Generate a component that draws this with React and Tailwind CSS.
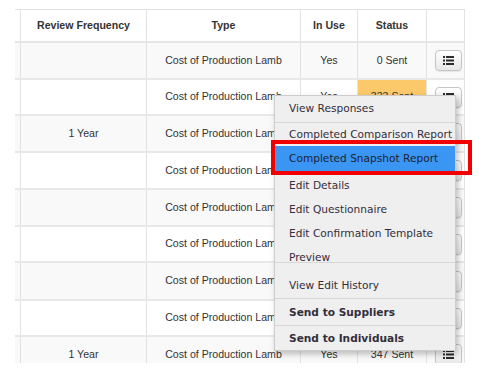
import React from "react";

const rows = [
  { freq: "", inUse: "Yes", status: "0 Sent", h: 37 },
  { freq: "", inUse: "Yes", status: "333 Sent", h: 36, orange: true },
  { freq: "1 Year", inUse: "Yes", status: "12 Sent", h: 37 },
  { freq: "", inUse: "Yes", status: "0 Sent", h: 37 },
  { freq: "", inUse: "Yes", status: "0 Sent", h: 37 },
  { freq: "", inUse: "Yes", status: "0 Sent", h: 36 },
  { freq: "", inUse: "Yes", status: "0 Sent", h: 38 },
  { freq: "", inUse: "Yes", status: "0 Sent", h: 36 },
  { freq: "1 Year", inUse: "Yes", status: "347 Sent", h: 37 },
];

function ListIcon() {
  return (
    <svg width="11" height="9" viewBox="0 0 11 9" fill="#2b2b2b">
      <rect x="0" y="0" width="2" height="2" />
      <rect x="3" y="0" width="8" height="2" />
      <rect x="0" y="3.5" width="2" height="2" />
      <rect x="3" y="3.5" width="8" height="2" />
      <rect x="0" y="7" width="2" height="2" />
      <rect x="3" y="7" width="8" height="2" />
    </svg>
  );
}

const cell = "flex items-center justify-center border-r border-[#e2e2e2]";

const menuItems = [
  { t: "View Responses", h: 26, pt: 5 },
  { sep: true },
  { t: "Completed Comparison Report", h: 23, pt: 4 },
  { t: "Completed Snapshot Report", h: 25, pt: 5, active: true },
  { sep: true },
  { t: "Edit Details", h: 24, pt: 6 },
  { t: "Edit Questionnaire", h: 24, pt: 6 },
  { t: "Edit Confirmation Template", h: 24, pt: 6 },
  { t: "Preview", h: 18, pt: 6 },
  { sep: true },
  { t: "View Edit History", h: 35, pt: 15 },
  { sep: true },
  { t: "Send to Suppliers", h: 26, pt: 6, bold: true },
  { sep: true },
  { t: "Send to Individuals", h: 24, pt: 5, bold: true },
];

export default function App() {
  return (
    <div className="relative w-[479px] h-[379px] bg-white overflow-hidden">
      <div className="pl-[15px] pt-[9px]">
        <div
          className="w-[450px] h-[354px] overflow-hidden border-t border-[#e2e2e2] text-[#333] text-[10.6px]"
          style={{ fontFamily: '"Liberation Sans", Arial, sans-serif' }}
        >
          <div className="grid grid-cols-[6px_126px_154px_57px_69px_38px] h-[33px] border-b-2 border-[#e6e6e6] bg-white font-bold">
            <div className={cell}></div>
            <div className={cell}>Review Frequency</div>
            <div className={cell}>Type</div>
            <div className={cell}>In Use</div>
            <div className={cell}>Status</div>
            <div className={cell}></div>
          </div>
          {rows.map((r, i) => (
            <div
              key={i}
              className={
                "grid grid-cols-[6px_126px_154px_57px_69px_38px] border-b-2 border-[#e8e8e8] " +
                (i % 2 === 0 ? "bg-[#f9f9f9]" : "bg-white")
              }
              style={{ height: r.h }}
            >
              <div className={cell}></div>
              <div className={cell}>{r.freq}</div>
              <div className={cell}>Cost of Production Lamb</div>
              <div className={cell}>{r.inUse}</div>
              <div className={cell + (r.orange ? " bg-[#fcc96a]" : "")}>{r.status}</div>
              <div className={cell + " justify-start pl-[8px]"}>
                <div className="w-[27px] h-[21px] rounded-[4px] border border-[#c4c4c4] bg-gradient-to-b from-white to-[#e8e8e8] shadow-[0_1px_1px_rgba(0,0,0,0.08)] flex items-center justify-center">
                  <ListIcon />
                </div>
              </div>
            </div>
          ))}
        </div>
      </div>

      <div
        className="absolute left-[274px] top-[95px] w-[182px] bg-[#efefef] border border-[#cdcdcd] shadow-[2px_3px_6px_rgba(0,0,0,0.25)] text-[10.6px] text-[#332e3c] flex flex-col"
        style={{ fontFamily: '"DejaVu Sans", Verdana, sans-serif' }}
      >
        {menuItems.map((m, i) =>
          m.sep ? (
            <div key={i} className="h-px bg-[#d6d6d6]" />
          ) : (
            <div
              key={i}
              className={
                "pl-[14px] leading-[14px] whitespace-nowrap " +
                (m.bold ? "font-bold " : "") +
                (m.active ? "bg-[#3a95f3] text-[#1c2333]" : "")
              }
              style={{ height: m.h, paddingTop: m.pt }}
            >
              {m.t}
            </div>
          )
        )}
      </div>

      <div className="absolute left-[271px] top-[140px] w-[201px] h-[35px] border-[4px] border-[#f20000]" />
    </div>
  );
}
